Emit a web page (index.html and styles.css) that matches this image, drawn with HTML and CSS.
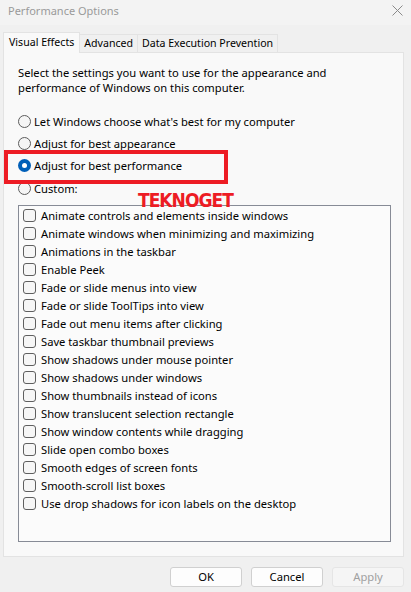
FILE: index.html
```html
<!DOCTYPE html>
<html>
<head>
<meta charset="utf-8">
<link rel="stylesheet" href="styles.css">
</head>
<body>
<div class="window">
  <div class="titlebar">
    <span class="title">Performance Options</span>
    <svg class="close" width="11" height="11" viewBox="0 0 11 11"><path d="M0.5 0.5 L10.5 10.5 M10.5 0.5 L0.5 10.5" stroke="#8a8a8a" stroke-width="1" fill="none"/></svg>
  </div>
  <div class="tabs">
    <div class="tab active">Visual Effects</div>
    <div class="tab">Advanced</div>
    <div class="tab">Data Execution Prevention</div>
  </div>
  <div class="panel">
    <p class="intro">Select the settings you want to use for the appearance and<br>performance of Windows on this computer.</p>
    <div class="radios">
      <div class="radio-row"><span class="radio"></span><span>Let Windows choose what's best for my computer</span></div>
      <div class="radio-row"><span class="radio"></span><span>Adjust for best appearance</span></div>
      <div class="radio-row"><span class="radio checked"></span><span>Adjust for best performance</span></div>
      <div class="radio-row"><span class="radio"></span><span>Custom:</span></div>
    </div>
    <div class="listbox">
      <div class="item"><span class="check"></span>Animate controls and elements inside windows</div>
      <div class="item"><span class="check"></span>Animate windows when minimizing and maximizing</div>
      <div class="item"><span class="check"></span>Animations in the taskbar</div>
      <div class="item"><span class="check"></span>Enable Peek</div>
      <div class="item"><span class="check"></span>Fade or slide menus into view</div>
      <div class="item"><span class="check"></span>Fade or slide ToolTips into view</div>
      <div class="item"><span class="check"></span>Fade out menu items after clicking</div>
      <div class="item"><span class="check"></span>Save taskbar thumbnail previews</div>
      <div class="item"><span class="check"></span>Show shadows under mouse pointer</div>
      <div class="item"><span class="check"></span>Show shadows under windows</div>
      <div class="item"><span class="check"></span>Show thumbnails instead of icons</div>
      <div class="item"><span class="check"></span>Show translucent selection rectangle</div>
      <div class="item"><span class="check"></span>Show window contents while dragging</div>
      <div class="item"><span class="check"></span>Slide open combo boxes</div>
      <div class="item"><span class="check"></span>Smooth edges of screen fonts</div>
      <div class="item"><span class="check"></span>Smooth-scroll list boxes</div>
      <div class="item"><span class="check"></span>Use drop shadows for icon labels on the desktop</div>
    </div>
  </div>
  <div class="buttons">
    <div class="btn">OK</div>
    <div class="btn">Cancel</div>
    <div class="btn disabled">Apply</div>
  </div>
  <div class="highlight"></div>
  <div class="watermark">TEKNOGET</div>
</div>
</body>
</html>
```

FILE: styles.css
```css
* { box-sizing: border-box; }
html, body { margin: 0; padding: 0; }
body {
  width: 411px;
  height: 592px;
  background: #f0f0f0;
  font-family: "Noto Sans", "Open Sans", sans-serif;
  font-size: 11.2px;
  color: #000;
  overflow: hidden;
}
.window { position: relative; width: 411px; height: 592px; }
.titlebar {
  height: 25px;
  background: #f3f3f3;
  display: flex;
  align-items: center;
  justify-content: space-between;
  padding: 0 8px 4px 8px;
}
.title { color: #9a9a9a; font-size: 11px; }
.tabs {
  display: flex;
  align-items: flex-end;
  height: 27px;
  padding-left: 3px;
}
.tab {
  height: 18px;
  line-height: 17px;
  padding: 0 4px;
  border: 1px solid #e3e3e3;
  border-bottom: none;
  border-left: none;
  background: #f0f0f0;
  white-space: nowrap;
  font-size: 10.6px;
}
.tab.active {
  height: 21px;
  line-height: 19px;
  border-left: 1px solid #e3e3e3;
  background: #f9f9f9;
  margin-bottom: -1px;
  position: relative;
  z-index: 1;
  padding: 0 5px;
}
.panel {
  margin-left: 3px;
  width: 401px;
  height: 505px;
  background: #f9f9f9;
  border: 1px solid #e3e3e3;
  padding: 12px 0 0 14px;
}
.intro { margin: 0; line-height: 15px; }
.radios { margin-top: 15px; display: flex; flex-direction: column; }
.radio-row {
  display: flex;
  align-items: center;
  height: 22.3px;
  gap: 3px;
}
.radio {
  width: 13px;
  height: 13px;
  border-radius: 50%;
  border: 1px solid #5c5c5c;
  background: #f5f5f5;
  flex: none;
}
.radio.checked {
  border: none;
  background: #005fb8;
  display: flex;
  align-items: center;
  justify-content: center;
}
.radio.checked::after {
  content: "";
  width: 5px;
  height: 5px;
  border-radius: 50%;
  background: #fff;
}
.listbox {
  margin-top: 6px;
  width: 373px;
  height: 337px;
  border: 1px solid #878b96;
  background: #fbfbfb;
  padding: 0 0 0 4px;
}
.item {
  height: 18px;
  display: flex;
  align-items: center;
  gap: 5px;
  white-space: nowrap;
}
.check {
  width: 13px;
  height: 13px;
  border: 1px solid #5f5f5f;
  border-radius: 3px;
  background: #f6f6f6;
  flex: none;
}
.buttons {
  display: flex;
  justify-content: flex-end;
  gap: 9px;
  padding: 10px 7px 0 0;
}
.btn {
  width: 72px;
  height: 20px;
  border: 1px solid #d0d0d0;
  border-radius: 3px;
  background: #fdfdfd;
  text-align: center;
  line-height: 18px;
}
.btn.disabled {
  color: #a0a0a0;
  background: #f5f5f5;
  border-color: #e5e5e5;
}
.highlight {
  position: absolute;
  left: 4px;
  top: 150px;
  width: 224px;
  height: 34px;
  border: 4px solid #ed1c24;
}
.watermark {
  position: absolute;
  left: 138px;
  top: 191px;
  color: #ed1c24;
  font-family: "DejaVu Sans Condensed", "DejaVu Sans", sans-serif;
  font-weight: bold;
  font-size: 19px;
  letter-spacing: -1px;
  line-height: 18px;
}
```
